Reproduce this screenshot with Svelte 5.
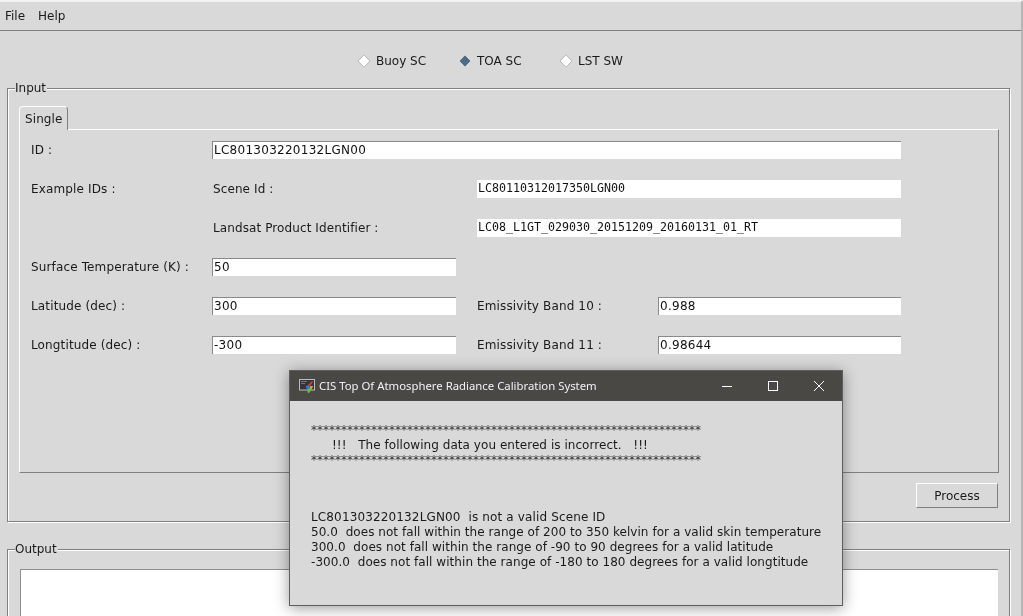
<script>
  const modes = [
    { label: "Buoy SC", on: false },
    { label: "TOA SC", on: true },
    { label: "LST SW", on: false }
  ];
  const stars = "*".repeat(65);
  const errors = [
    "LC801303220132LGN00  is not a valid Scene ID",
    "50.0  does not fall within the range of 200 to 350 kelvin for a valid skin temperature",
    "300.0  does not fall within the range of -90 to 90 degrees for a valid latitude",
    "-300.0  does not fall within the range of -180 to 180 degrees for a valid longtitude"
  ];
</script>

<div class="window">
  <div class="menubar">
    <span>File</span>
    <span>Help</span>
  </div>

  <div class="modes">
    {#each modes as mode}
      <label class="mode">
        <i class="diamond" class:on={mode.on}></i>
        <span>{mode.label}</span>
      </label>
    {/each}
  </div>

  <section class="group input-group">
    <span class="legend">Input</span>
    <div class="tabs">
      <div class="tab">Single</div>
    </div>
    <div class="tab-body">
      <span class="lbl">ID :</span>
      <div class="field span3">LC801303220132LGN00</div>

      <span class="lbl">Example IDs :</span>
      <span class="lbl inner">Scene Id :</span>
      <div class="field plain span2">LC80110312017350LGN00</div>

      <span class="lbl inner col2">Landsat Product Identifier :</span>
      <div class="field plain span2">LC08_L1GT_029030_20151209_20160131_01_RT</div>

      <span class="lbl">Surface Temperature (K) :</span>
      <div class="field short">50</div>
      <span class="span2"></span>

      <span class="lbl">Latitude (dec) :</span>
      <div class="field short">300</div>
      <span class="lbl">Emissivity Band 10 :</span>
      <div class="field">0.988</div>

      <span class="lbl">Longtitude (dec) :</span>
      <div class="field short">-300</div>
      <span class="lbl">Emissivity Band 11 :</span>
      <div class="field">0.98644</div>
    </div>
    <div class="actions">
      <button class="process">Process</button>
    </div>
  </section>

  <section class="group output-group">
    <span class="legend">Output</span>
    <div class="output"></div>
  </section>

  <div class="dialog">
    <div class="titlebar">
      <svg class="app-icon" width="16" height="14" viewBox="0 0 16 14">
        <rect x="0.5" y="0.5" width="15" height="10.5" fill="#34343a" stroke="#bdbdbd" />
        <path d="M2 2h6v1H2zM2 4h4v1H2z" fill="#777" />
        <path d="M13 2l1 1-3 4-2-1z" fill="#d8402f" />
        <path d="M7 7l3-1 1 3-3 2z" fill="#3a7fd5" />
        <path d="M11 7l3 0-1 3-2 0z" fill="#e8a02c" />
        <path d="M8 11l3-2 2 1-3 4-1 0z" fill="#65c23f" />
      </svg>
      <span class="title">CIS Top Of Atmosphere Radiance Calibration System</span>
      <div class="controls">
        <svg width="12" height="12" viewBox="0 0 12 12"><path d="M1 6.5h10" stroke="#fff" /></svg>
        <svg width="12" height="12" viewBox="0 0 12 12"><rect x="1.5" y="1.5" width="9" height="9" fill="none" stroke="#fff" /></svg>
        <svg width="12" height="12" viewBox="0 0 12 12"><path d="M1 1l10 10M11 1L1 11" stroke="#fff" /></svg>
      </div>
    </div>
    <div class="message">
      <div class="stars">{stars}</div>
      <div class="notice">!!!   The following data you entered is incorrect.   !!!</div>
      <div class="stars">{stars}</div>
      <div class="errors">
        {#each errors as line}
          <div>{line}</div>
        {/each}
      </div>
    </div>
  </div>
</div>

<style>
  :global(body) {
    margin: 0;
    background: #d9d9d9;
  }

  .window {
    position: relative;
    width: 1023px;
    height: 616px;
    overflow: hidden;
    box-sizing: border-box;
    background: #d9d9d9;
    color: #1a1a1a;
    font-family: "DejaVu Sans", sans-serif;
    font-size: 12px;
    border-top: 2px solid #f2f2f2;
    border-right: 2px solid #b5b5b5;
    will-change: transform;
  }

  .menubar {
    display: flex;
    gap: 13px;
    height: 29px;
    box-sizing: border-box;
    padding: 7px 5px 0;
    border-bottom: 1px solid #808080;
    line-height: 14px;
  }

  .modes {
    display: flex;
    padding-left: 358px;
    height: 57px;
    box-sizing: border-box;
    padding-top: 22px;
  }

  .mode {
    display: flex;
    align-items: center;
    gap: 8px;
    width: 101px;
    height: 15px;
  }

  .diamond {
    width: 8px;
    height: 8px;
    margin-left: 2px;
    background: #fff;
    transform: rotate(45deg);
    box-shadow: 0 0 0 0.5px #9a9a9a;
  }

  .diamond.on {
    background: #4f6a86;
    box-shadow: 0 0 0 0.5px #fff;
  }

  .group {
    position: relative;
    box-sizing: border-box;
    margin-left: 7px;
    width: 1003px;
    border: 1px solid #808080;
    box-shadow: inset 1px 1px 0 #fff, 1px 1px 0 #fff;
  }

  .legend {
    position: absolute;
    top: -8px;
    left: 7px;
    padding: 0 1px 0 0;
    background: #d9d9d9;
    line-height: 14px;
  }

  .input-group {
    height: 434px;
    padding: 17px 11px 0;
  }

  .tabs {
    display: flex;
    height: 23px;
  }

  .tab {
    box-sizing: border-box;
    width: 49px;
    height: 24px;
    padding: 5px 0 0 5px;
    line-height: 14px;
    letter-spacing: 0.1px;
    border: 1px solid #808080;
    border-left-color: #fff;
    border-top-color: #fff;
    border-bottom: none;
    border-radius: 4px 4px 0 0;
    background: #d9d9d9;
    position: relative;
    z-index: 1;
  }

  .tab-body {
    box-sizing: border-box;
    display: grid;
    grid-template-columns: 181px 265px 181px 243px;
    grid-auto-rows: 18px;
    row-gap: 21px;
    align-items: center;
    width: 980px;
    height: 344px;
    padding: 11px 0 0 11px;
    border: 1px solid #808080;
    border-left-color: #fff;
    border-top-color: #fff;
  }

  .lbl {
    line-height: 14px;
    letter-spacing: 0.14px;
  }

  .inner {
    padding-left: 1px;
    letter-spacing: 0.1px;
  }

  .col2 {
    grid-column: 2;
  }

  .span2 {
    grid-column: span 2;
  }

  .span3 {
    grid-column: span 3;
  }

  .field {
    box-sizing: border-box;
    height: 18px;
    padding: 1px 1px 0 1px;
    background: #fff;
    border-top: 1px solid #8a8a8a;
    border-left: 1px solid #8a8a8a;
    line-height: 15px;
    letter-spacing: 0.27px;
    color: #111;
  }

  .field.plain {
    border: none;
    padding: 1px 0 0 1px;
    font-family: "DejaVu Sans Mono", monospace;
    font-size: 11.63px;
    letter-spacing: 0;
  }

  .field.short {
    width: 244px;
  }

  .actions {
    display: flex;
    justify-content: flex-end;
    padding-top: 10px;
  }

  .process {
    box-sizing: border-box;
    width: 82px;
    height: 25px;
    padding: 0;
    font: inherit;
    color: inherit;
    background: #d9d9d9;
    border: 1px solid #808080;
    border-left-color: #fff;
    border-top-color: #fff;
  }

  .output-group {
    height: 80px;
    margin-top: 27px;
    padding: 19px 11px 0 12px;
  }

  .output {
    height: 60px;
    background: #fff;
    border: 1px solid #8f8f8f;
    border-bottom: none;
    border-right: none;
  }

  .dialog {
    position: absolute;
    left: 289px;
    top: 368px;
    width: 554px;
    height: 236px;
    box-sizing: border-box;
    background: #d9d9d9;
    border: 1px solid #5e5e5e;
    box-shadow: 0 2px 14px rgba(0, 0, 0, 0.4);
  }

  .titlebar {
    display: flex;
    align-items: center;
    height: 30px;
    padding-left: 9px;
    background: #4a4845;
    color: #f2f2f2;
  }

  .title {
    margin-left: 4px;
    padding-bottom: 2px;
    font-family: "Noto Sans", sans-serif;
    font-size: 11.35px;
  }

  .controls {
    display: flex;
    gap: 34px;
    margin-left: auto;
    padding-right: 17px;
  }

  .message {
    padding: 22px 0 0 21px;
    line-height: 15px;
    letter-spacing: 0.05px;
  }

  .stars {
    letter-spacing: 0;
    color: #333;
  }

  .notice {
    white-space: pre;
    padding-left: 21px;
  }

  .errors {
    margin-top: 42px;
  }

  .errors div {
    white-space: pre;
  }

  .errors div:first-child {
    letter-spacing: 0.14px;
  }
</style>
